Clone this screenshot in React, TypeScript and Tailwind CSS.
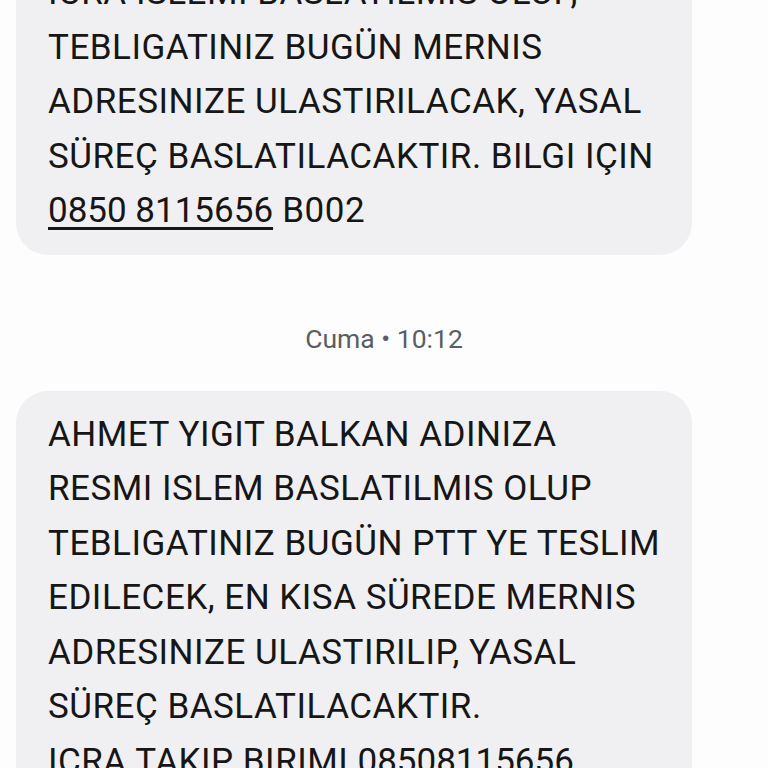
const msgFont = "'Roboto', 'Noto Sans', sans-serif"

function Bubble({ children, className = '' }: { children: React.ReactNode; className?: string }) {
  return (
    <div
      className={`ml-4 w-[676px] whitespace-nowrap rounded-[32px] bg-[#f0f0f2] pl-8 pr-6 text-[35px] leading-[54.5px] tracking-[0.5px] text-[#161616] ${className}`}
      style={{ fontFamily: msgFont }}
    >
      {children}
    </div>
  )
}

function Phone({ children }: { children: React.ReactNode }) {
  return <span className="tracking-normal underline decoration-[2.5px] underline-offset-[5px]">{children}</span>
}

export default function App() {
  return (
    <div className="h-[768px] w-[768px] overflow-hidden bg-[#fdfdfd]">
      <div className="-mt-[51px]">
        <Bubble className="pt-[17px] pb-[16px]">
          <div>ICRA ISLEMI BASLATILMIS OLUP,</div>
          <div>TEBLIGATINIZ BUGÜN MERNIS</div>
          <div>ADRESINIZE ULASTIRILACAK, YASAL</div>
          <div>SÜREÇ BASLATILACAKTIR. BILGI IÇIN</div>
          <div>
            <Phone>0850 8115656</Phone> B002
          </div>
        </Bubble>

        <div className="flex h-[136px] justify-center pt-[68px]">
          <span
            className="text-[26.5px] leading-[32px] text-[#5c5d62]"
            style={{ fontFamily: "'Roboto', sans-serif" }}
          >
            Cuma • 10:12
          </span>
        </div>

        <Bubble className="pt-[17px] pb-[17px]">
          <div>AHMET YIGIT BALKAN ADINIZA</div>
          <div>RESMI ISLEM BASLATILMIS OLUP</div>
          <div>TEBLIGATINIZ BUGÜN PTT YE TESLIM</div>
          <div>EDILECEK, EN KISA SÜREDE MERNIS</div>
          <div>ADRESINIZE ULASTIRILIP, YASAL</div>
          <div>SÜREÇ BASLATILACAKTIR.</div>
          <div>
            ICRA TAKIP BIRIMI <Phone>08508115656</Phone>
          </div>
        </Bubble>
      </div>
    </div>
  )
}
